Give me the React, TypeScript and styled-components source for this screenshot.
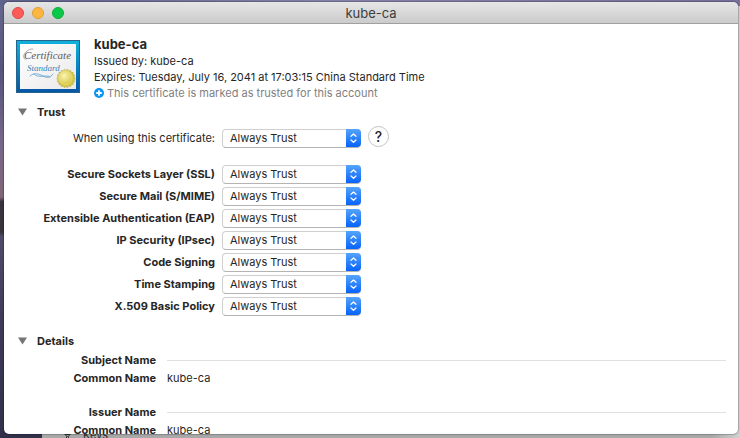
import React, { useState } from "react";
import styled, { createGlobalStyle } from "styled-components";

const GlobalStyle = createGlobalStyle`
  * { box-sizing: border-box; }
  html, body, #root { height: 100%; }
  body {
    margin: 0;
    overflow: hidden;
    font-family: Inter, "Liberation Sans", sans-serif;
    font-size: 11px;
    line-height: 16px;
    color: #262626;
  }
  button, select { font: inherit; color: inherit; margin: 0; }
`;

const Desktop = styled.div`
  position: relative;
  isolation: isolate;
  display: flex;
  height: 100vh;
  padding: 2px 2px 4px 4px;
  background: linear-gradient(
    180deg,
    #65678f 0,
    #56557c 16%,
    #77668a 32%,
    #806679 45%,
    #393340 46%,
    #38333b 53%,
    #504b69 54%,
    #3d3a58 75%,
    #303149 100%
  );
`;

const SkyStrip = styled.div`
  position: absolute;
  z-index: -1;
  inset: 0 0 auto 0;
  height: 6px;
  background: linear-gradient(90deg, #5f628b, #8784aa 45%, #77719b);
`;

const BackWindow = styled.div`
  position: absolute;
  z-index: -1;
  inset: 5px 0 0 42px;
  display: flex;
  align-items: flex-end;
  gap: 12px;
  padding-left: 22px;
  background: linear-gradient(90deg, #a9a9a9 96%, #d2d2d2);
  color: #303030;
`;

const BackLabel = styled.span`
  line-height: 12px;
  margin-bottom: -3px;
`;

const BackIcon = styled.svg`
  width: 7px;
  height: 5px;
`;

const Window = styled.main`
  flex: 1;
  min-width: 0;
  display: flex;
  flex-direction: column;
  overflow: hidden;
  border-radius: 5px;
  background: #fff;
  box-shadow: 0 0 1px 1px rgba(0, 0, 0, 0.22);
`;

const TitleBar = styled.header`
  flex: none;
  display: grid;
  grid-template-columns: 1fr auto 1fr;
  align-items: center;
  height: 22px;
  padding: 0 8px;
  border-bottom: 1px solid #a0a0a0;
  background: linear-gradient(#e6e6e6, #cbcbcb);
`;

const Lights = styled.div`
  display: flex;
  gap: 8px;
`;

const Light = styled.button<{ $fill: string; $edge: string }>`
  width: 12px;
  height: 12px;
  padding: 0;
  border: 1px solid ${(p) => p.$edge};
  border-radius: 50%;
  background: ${(p) => p.$fill};
`;

const WindowTitle = styled.span`
  font-size: 13px;
  color: #3d3d3d;
`;

const Content = styled.div`
  flex: 1;
  min-height: 0;
  overflow: hidden;
  padding: 12px 12px 0;
`;

const Summary = styled.section`
  display: flex;
  gap: 14px;
  align-items: flex-start;
`;

const CertificateIcon = styled.svg`
  flex: none;
  width: 64px;
  height: 54px;
  margin-top: 4px;
`;

const Name = styled.h1`
  margin: 0;
  font-size: 13px;
  line-height: 17px;
  font-weight: 700;
`;

const Line = styled.p`
  margin: 0;
`;

const Status = styled.p`
  display: flex;
  align-items: center;
  gap: 3px;
  margin: 0;
  color: #7f7f7f;
`;

const Disclosure = styled.h2`
  display: flex;
  margin: 0;
  font-size: 11px;
  font-weight: 700;
`;

const DisclosureButton = styled.button`
  display: flex;
  align-items: center;
  gap: 10px;
  padding: 0 0 0 2px;
  border: 0;
  background: none;
`;

const Arrow = styled.svg<{ $open: boolean }>`
  width: 9px;
  height: 8px;
  transform: ${(p) => (p.$open ? "none" : "rotate(-90deg)")};
`;

const TrustSection = styled.section`
  margin-top: 3px;
`;

const TrustRows = styled.div`
  display: flex;
  flex-direction: column;
  padding-bottom: 16px;
`;

const TrustRow = styled.div<{ $lead?: boolean }>`
  display: grid;
  grid-template-columns: 199px 139px auto;
  justify-content: start;
  column-gap: 7px;
  align-items: center;
  height: 22px;
  margin: ${(p) => (p.$lead ? "7px 0 14px" : "0")};
`;

const TrustLabel = styled.label<{ $strong?: boolean }>`
  text-align: right;
  white-space: nowrap;
  font-weight: ${(p) => (p.$strong ? 700 : 400)};
`;

const Picker = styled.span`
  display: grid;
  grid-template-columns: 1fr 15px;
  height: 19px;
`;

const Select = styled.select`
  grid-area: 1 / 1 / 2 / 3;
  appearance: none;
  width: 100%;
  height: 19px;
  padding: 0 20px 0 7px;
  border: 1px solid #cfcfcf;
  border-bottom-color: #b4b4b4;
  border-radius: 4px;
  background: #fff;
  line-height: 16px;
`;

const PickerCap = styled.svg`
  grid-area: 1 / 2 / 2 / 3;
  z-index: 1;
  width: 15px;
  height: 18px;
  border-radius: 0 4px 4px 0;
  background: linear-gradient(#55a4fb, #0763fb);
  pointer-events: none;
`;

const HelpButton = styled.button`
  width: 21px;
  height: 21px;
  margin-top: -3px;
  padding: 0;
  border: 1px solid #c3c3c3;
  border-radius: 50%;
  background: #fff;
  font-size: 14px;
  font-weight: 500;
  line-height: 19px;
`;

const DetailList = styled.dl`
  display: grid;
  grid-template-columns: 140px 1fr;
  column-gap: 11px;
  align-items: center;
  margin: 2px 0 0;
`;

const Term = styled.dt`
  line-height: 18px;
  text-align: right;
  font-weight: 700;
`;

const Value = styled.dd`
  margin: 0;
  line-height: 18px;
`;

const Rule = styled.dd`
  margin: 0;
  height: 1px;
  background: #e0e0e0;
`;

const GroupGap = styled.div`
  grid-column: 1 / -1;
  height: 16px;
`;

const policies = [
  "Secure Sockets Layer (SSL)",
  "Secure Mail (S/MIME)",
  "Extensible Authentication (EAP)",
  "IP Security (IPsec)",
  "Code Signing",
  "Time Stamping",
  "X.509 Basic Policy",
];

const sealPoints = Array.from({ length: 36 }, (_, i) => {
  const radius = i % 2 ? 8 : 9.3;
  const angle = (i * Math.PI) / 18;
  return `${50 + radius * Math.cos(angle)},${38.5 + radius * Math.sin(angle)}`;
}).join(" ");

function Certificate() {
  return (
    <CertificateIcon viewBox="0 0 64 54" role="img" aria-label="Certificate">
      <defs>
        <linearGradient id="frame" x1="0" y1="0" x2="0" y2="1">
          <stop offset="0" stopColor="#10b2dc" />
          <stop offset="1" stopColor="#0755a5" />
        </linearGradient>
        <linearGradient id="paper" x1="0" y1="0" x2="1" y2="1">
          <stop offset="0" stopColor="#fff" />
          <stop offset="1" stopColor="#e9e9eb" />
        </linearGradient>
        <radialGradient id="seal" cx="0.4" cy="0.35">
          <stop offset="0" stopColor="#fbf6b4" />
          <stop offset="1" stopColor="#d6c748" />
        </radialGradient>
      </defs>
      <rect x="0.5" y="0.5" width="63" height="52" fill="url(#frame)" stroke="#25658d" />
      <rect x="4" y="4" width="56" height="45" fill="url(#paper)" />
      <g fontFamily="Liberation Serif, serif" fontStyle="italic">
        <text x="8" y="19" fontSize="11" fill="#5a5a60">Certificate</text>
        <text x="11" y="31" fontSize="9" fill="#3a86b8">Standard</text>
      </g>
      <g fill="none" strokeLinecap="round">
        <path d="M17 9C13 8 6 14 8 18C9 20 11 19 12 18" stroke="#77777c" strokeWidth="0.6" />
        <path d="M14 36C18 32 23 34 27 36S34 38 37 34M18 34C22 39 31 34 34 37" stroke="#5aa0cc" strokeWidth="0.8" />
      </g>
      <polygon points={sealPoints} fill="url(#seal)" stroke="#b7a83c" strokeWidth="0.6" />
      <circle cx="50" cy="38.5" r="6" fill="none" stroke="#e9df83" strokeWidth="0.7" />
    </CertificateIcon>
  );
}

function TrustPicker({ id }: { id: string }) {
  return (
    <Picker>
      <Select id={id} defaultValue="Always Trust">
        <option>Always Trust</option>
        <option>Never Trust</option>
      </Select>
      <PickerCap viewBox="0 0 15 18" aria-hidden="true">
        <path
          d="M5 7.3L7.5 5L10 7.3M5 11L7.5 13.3L10 11"
          fill="none"
          stroke="#fff"
          strokeWidth="1.2"
          strokeLinecap="round"
          strokeLinejoin="round"
        />
      </PickerCap>
    </Picker>
  );
}

function SectionTitle(props: { title: string; open: boolean; onToggle: () => void }) {
  return (
    <Disclosure>
      <DisclosureButton aria-expanded={props.open} onClick={props.onToggle}>
        <Arrow $open={props.open} viewBox="0 0 9 8" aria-hidden="true">
          <path d="M0 0.5H9L4.5 7.5Z" fill="#757575" />
        </Arrow>
        {props.title}
      </DisclosureButton>
    </Disclosure>
  );
}

export default function App() {
  const [trustOpen, setTrustOpen] = useState(true);
  const [detailsOpen, setDetailsOpen] = useState(true);

  return (
    <>
      <GlobalStyle />
      <Desktop>
        <BackWindow>
          <BackIcon viewBox="0 0 7 5" aria-hidden="true">
            <path d="M0.5 1.5H6.5M1.5 2L3.5 4L5.5 2M2.5 3.5V5M4.5 3.5V5" fill="none" stroke="#333" />
          </BackIcon>
          <BackLabel>Keys</BackLabel>
        </BackWindow>
        <SkyStrip />
        <Window>
          <TitleBar>
            <Lights>
              <Light $fill="#fc5b57" $edge="#df4744" aria-label="Close" />
              <Light $fill="#fdb63f" $edge="#de9f34" aria-label="Minimize" />
              <Light $fill="#0ac84a" $edge="#12ac38" aria-label="Zoom" />
            </Lights>
            <WindowTitle>kube-ca</WindowTitle>
          </TitleBar>
          <Content>
            <Summary>
              <Certificate />
              <div>
                <Name>kube-ca</Name>
                <Line>Issued by: kube-ca</Line>
                <Line>Expires: Tuesday, July 16, 2041 at 17:03:15 China Standard Time</Line>
                <Status>
                  <svg width="10" height="10" viewBox="0 0 10 10" aria-hidden="true">
                    <circle cx="5" cy="5" r="5" fill="#0a95f2" />
                    <path d="M5 2.2V7.8M2.2 5H7.8" stroke="#fff" strokeWidth="1.8" />
                  </svg>
                  This certificate is marked as trusted for this account
                </Status>
              </div>
            </Summary>
            <TrustSection>
              <SectionTitle title="Trust" open={trustOpen} onToggle={() => setTrustOpen(!trustOpen)} />
              {trustOpen && (
                <TrustRows>
                  <TrustRow $lead>
                    <TrustLabel htmlFor="all">When using this certificate:</TrustLabel>
                    <TrustPicker id="all" />
                    <HelpButton aria-label="Help">?</HelpButton>
                  </TrustRow>
                  {policies.map((policy, i) => (
                    <TrustRow key={policy}>
                      <TrustLabel $strong htmlFor={`policy-${i}`}>{policy}</TrustLabel>
                      <TrustPicker id={`policy-${i}`} />
                    </TrustRow>
                  ))}
                </TrustRows>
              )}
            </TrustSection>
            <section>
              <SectionTitle title="Details" open={detailsOpen} onToggle={() => setDetailsOpen(!detailsOpen)} />
              {detailsOpen && (
                <DetailList>
                  <Term>Subject Name</Term>
                  <Rule />
                  <Term>Common Name</Term>
                  <Value>kube-ca</Value>
                  <GroupGap />
                  <Term>Issuer Name</Term>
                  <Rule />
                  <Term>Common Name</Term>
                  <Value>kube-ca</Value>
                </DetailList>
              )}
            </section>
          </Content>
        </Window>
      </Desktop>
    </>
  );
}
